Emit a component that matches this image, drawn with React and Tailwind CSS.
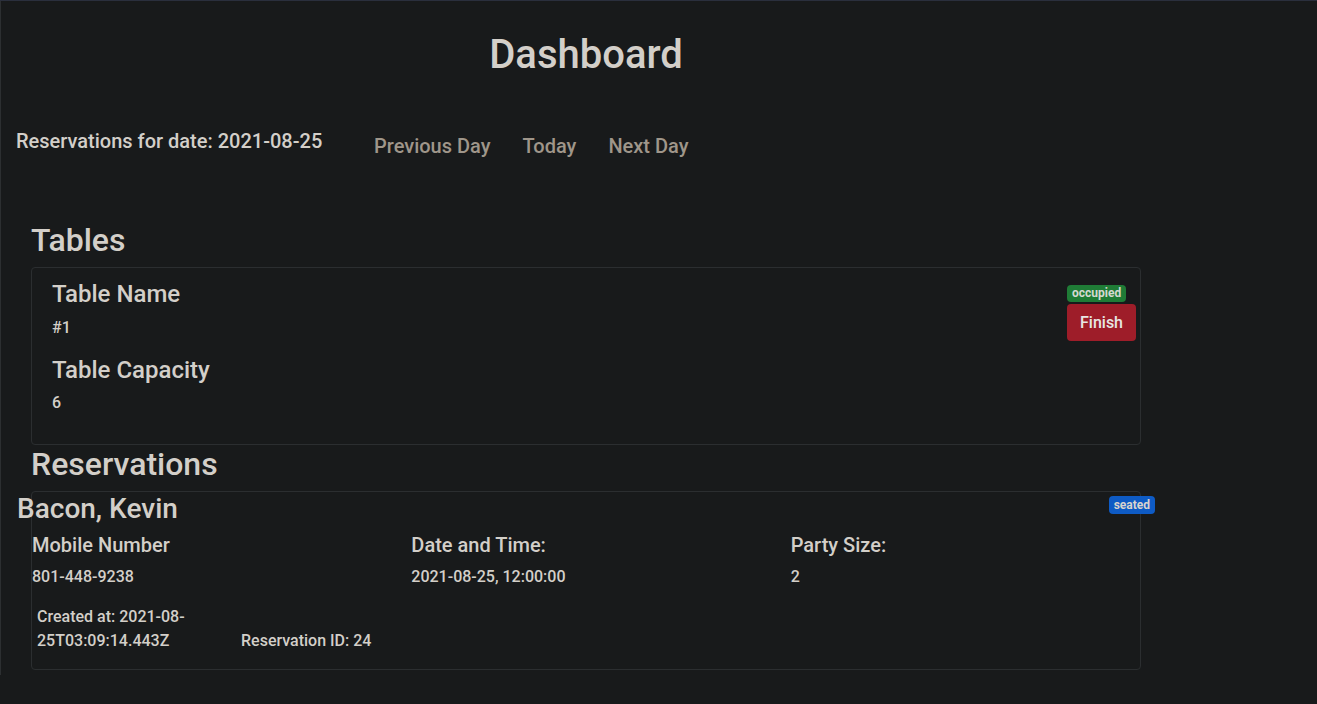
import React from "react";

export default function App() {
  return (
    <div className="min-h-[704px] w-full bg-[#181a1b] border-t border-[#2a2f3d] font-['Roboto',_'Liberation_Sans',_sans-serif] text-[#d3cfc9]">
      <main className="w-[1171px] border-l border-[#2c2f31] px-[15px] pb-[5px]">
        <h1 className="text-center text-[40px] leading-[1.2] font-medium pt-[30px] mb-[8px]">
          Dashboard
        </h1>

        <div className="flex items-start mt-[47px]">
          <div className="w-[342px] pt-[3px]">
            <h4 className="text-[20px] leading-[24px] font-medium">
              Reservations for date: 2021-08-25
            </h4>
          </div>
          <nav className="flex">
            <a className="px-4 py-2 text-[20px] leading-[24px] font-medium text-[#9f968a]">Previous Day</a>
            <a className="px-4 py-2 text-[20px] leading-[24px] font-medium text-[#9f968a]">Today</a>
            <a className="px-4 py-2 text-[20px] leading-[24px] font-medium text-[#9f968a]">Next Day</a>
          </nav>
        </div>

        <section className="px-[15px] mt-[55px]">
          <h2 className="text-[32px] leading-[1.2] font-medium mb-[8px]">Tables</h2>
          <div className="flex justify-between rounded-[4px] border border-[#2b2e30]">
            <div className="pl-5 pt-[12px] pb-[32px]">
              <h4 className="text-[24px] leading-[1.2] font-medium mb-[9px]">Table Name</h4>
              <h6 className="text-[16px] leading-[1.2] font-medium mb-[19px]">#1</h6>
              <h4 className="text-[24px] leading-[1.2] font-medium mb-[8px]">Table Capacity</h4>
              <h6 className="text-[16px] leading-[1.2] font-medium">6</h6>
            </div>
            <div className="flex flex-col items-start pt-[17px] pr-[4px]">
              <span className="rounded-[4px] bg-[#1f7c36] px-[5px] py-[2px] text-[12px] leading-[13px] font-bold text-[#d5d9d2]">
                occupied
              </span>
              <button className="mt-[2px] rounded-[4px] bg-[#9e1d29] px-[13px] py-[6px] text-[16px] leading-[25px] font-medium text-[#e8e6e3]">
                Finish
              </button>
            </div>
          </div>

          <h2 className="text-[32px] leading-[1.2] font-medium mb-[7px]">Reservations</h2>
          <div className="rounded-[4px] border border-[#2b2e30] pb-[16px]">
            <div className="flex justify-between items-start mx-[-15px]">
              <h3 className="text-[28px] leading-[1.2] font-medium">Bacon, Kevin</h3>
              <span className="mt-[4px] rounded-[4px] bg-[#0e5bc5] px-[5px] py-[3px] text-[12px] leading-[12px] font-bold text-[#d8d4cf]">
                seated
              </span>
            </div>
            <div className="grid grid-cols-3 mx-[-15px] mt-[8px]">
              <div className="px-[15px]">
                <h5 className="text-[20px] leading-[1.2] font-medium mb-[10px]">Mobile Number</h5>
                <h6 className="text-[16px] leading-[1.2] font-medium">801-448-9238</h6>
              </div>
              <div className="px-[15px]">
                <h5 className="text-[20px] leading-[1.2] font-medium mb-[10px]">Date and Time:</h5>
                <h6 className="text-[16px] leading-[1.2] font-medium">2021-08-25, 12:00:00</h6>
              </div>
              <div className="px-[15px]">
                <h5 className="text-[20px] leading-[1.2] font-medium mb-[10px]">Party Size:</h5>
                <h6 className="text-[16px] leading-[1.2] font-medium">2</h6>
              </div>
            </div>
            <div className="flex items-end pl-[5px] mt-[18px] text-[16px] leading-[24px] font-medium">
              <div className="w-[204px]">
                Created at: 2021-08-<wbr />25T03:09:14.443Z
              </div>
              <div>Reservation ID: 24</div>
            </div>
          </div>
        </section>
      </main>
    </div>
  );
}
